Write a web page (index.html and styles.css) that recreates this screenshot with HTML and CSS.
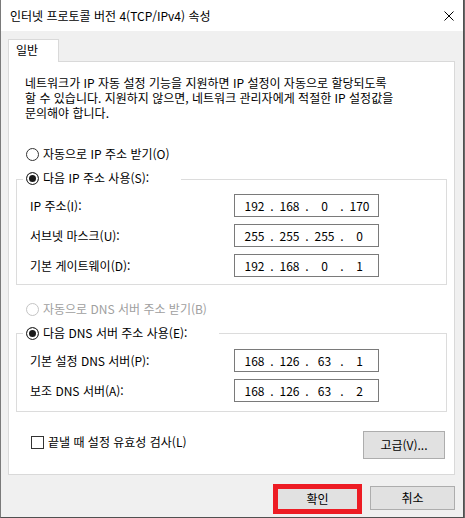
FILE: index.html
```html
<!DOCTYPE html>
<html lang="ko">

<head>
  <meta charset="UTF-8">
  <title>인터넷 프로토콜 버전 4(TCP/IPv4) 속성</title>
  <link rel="stylesheet" href="styles.css">
</head>

<body>
  <div class="window">
    <div class="titlebar">
      <span class="title">인터넷 프로토콜 버전 4(TCP/IPv4) 속성</span>
      <svg class="close" width="10" height="10" viewBox="0 0 10 10">
        <path d="M0.5 0.5L9.5 9.5M9.5 0.5L0.5 9.5" stroke="#000" stroke-width="1" fill="none"/>
      </svg>
    </div>

    <div class="dialog">
      <div class="tabs">
        <div class="tab">일반</div>
      </div>

      <div class="panel">
        <p class="intro">
          네트워크가 IP 자동 설정 기능을 지원하면 IP 설정이 자동으로 할당되도록<br>
          할 수 있습니다. 지원하지 않으면, 네트워크 관리자에게 적절한 IP 설정값을<br>
          문의해야 합니다.
        </p>

        <div class="radio-row first">
          <span class="radio"></span>자동으로 IP 주소 받기(O)
        </div>

        <div class="group ip-group">
          <div class="group-title">
            <span class="radio checked"></span>다음 IP 주소 사용(S):
          </div>
          <div class="field-row">
            <span class="field-label">IP 주소(I):</span>
            <div class="ip-box">
              <span class="octet">192</span><span class="dot">.</span><span class="octet">168</span><span class="dot">.</span><span class="octet">0</span><span class="dot">.</span><span class="octet">170</span>
            </div>
          </div>
          <div class="field-row">
            <span class="field-label">서브넷 마스크(U):</span>
            <div class="ip-box">
              <span class="octet">255</span><span class="dot">.</span><span class="octet">255</span><span class="dot">.</span><span class="octet">255</span><span class="dot">.</span><span class="octet">0</span>
            </div>
          </div>
          <div class="field-row">
            <span class="field-label">기본 게이트웨이(D):</span>
            <div class="ip-box">
              <span class="octet">192</span><span class="dot">.</span><span class="octet">168</span><span class="dot">.</span><span class="octet">0</span><span class="dot">.</span><span class="octet">1</span>
            </div>
          </div>
        </div>

        <div class="radio-row disabled">
          <span class="radio"></span>자동으로 DNS 서버 주소 받기(B)
        </div>

        <div class="group dns-group">
          <div class="group-title">
            <span class="radio checked"></span>다음 DNS 서버 주소 사용(E):
          </div>
          <div class="field-row">
            <span class="field-label">기본 설정 DNS 서버(P):</span>
            <div class="ip-box">
              <span class="octet">168</span><span class="dot">.</span><span class="octet">126</span><span class="dot">.</span><span class="octet">63</span><span class="dot">.</span><span class="octet">1</span>
            </div>
          </div>
          <div class="field-row">
            <span class="field-label">보조 DNS 서버(A):</span>
            <div class="ip-box">
              <span class="octet">168</span><span class="dot">.</span><span class="octet">126</span><span class="dot">.</span><span class="octet">63</span><span class="dot">.</span><span class="octet">2</span>
            </div>
          </div>
        </div>

        <div class="bottom-row">
          <div class="check-row">
            <span class="checkbox"></span>끝낼 때 설정 유효성 검사(L)
          </div>
          <button class="btn advanced">고급(V)...</button>
        </div>
      </div>

      <div class="footer">
        <div class="mark">
          <button class="btn ok">확인</button>
        </div>
        <button class="btn cancel">취소</button>
      </div>
    </div>
  </div>
</body>

</html>
```

FILE: styles.css
```css
* {
  box-sizing: border-box;
}

html {
  background: #6a6a6a;
}

body {
  margin: 0;
  font-family: "Noto Sans CJK KR", "Noto Sans", sans-serif;
  font-size: 12px;
  line-height: 16px;
  color: #000;
}

.window {
  width: 464px;
  height: 518px;
  background: #f0f0f0;
  border-left: 1px solid #7a7a7a;
  border-right: 1px solid #505050;
  border-bottom: 1px solid #505050;
  display: flex;
  flex-direction: column;
}

.titlebar {
  height: 31px;
  background: #fff;
  display: flex;
  align-items: center;
  justify-content: space-between;
  padding: 0 9px 0 9px;
}

.title {
  line-height: 16px;
}

.close {
  display: block;
  margin-top: 1px;
}

.dialog {
  padding: 8px 8px 0 7px;
}

.tabs {
  display: flex;
}

.tab {
  position: relative;
  z-index: 1;
  width: 51px;
  height: 23px;
  margin-bottom: -1px;
  padding: 1px 0 0 7px;
  background: #fff;
  border: 1px solid #d9d9d9;
  border-bottom: none;
  line-height: 17px;
}

.panel {
  height: 414px;
  background: #fff;
  border: 1px solid #d9d9d9;
  padding-top: 13px;
}

.intro {
  margin: 0;
  padding-left: 16px;
  line-height: 15px;
  white-space: nowrap;
}

.radio-row {
  display: flex;
  align-items: center;
  height: 16px;
  padding-left: 17px;
}

.radio-row.first {
  margin-top: 26px;
}

.radio-row.disabled {
  margin-top: 16px;
  color: #a0a0a0;
}

.radio {
  flex: 0 0 13px;
  width: 13px;
  height: 13px;
  margin-right: 4px;
  border: 1px solid #333;
  border-radius: 50%;
  background: #fff;
}

.radio.checked {
  background: #1a1a1a;
  box-shadow: inset 0 0 0 2px #fff;
}

.disabled .radio {
  border-color: #c4c4c4;
}

.group {
  margin: 17px 7px 0 7px;
  border: 1px solid #dcdcdc;
  padding: 0 0 7px 13px;
}

.group-title {
  display: flex;
  align-items: center;
  width: fit-content;
  height: 16px;
  margin: -10px 0 0 -7px;
  padding: 0 32px 0 3px;
  background: #fff;
}

.ip-group .group-title + .field-row {
  margin-top: 8px;
}

.dns-group {
  margin-top: 16px;
  padding-bottom: 9px;
}

.dns-group .group-title {
  margin-top: -9px;
}

.dns-group .group-title + .field-row {
  margin-top: 8px;
}

.field-row {
  display: flex;
  align-items: center;
  margin-top: 7px;
}

.field-label {
  flex: 0 0 204px;
}

.ip-box {
  display: flex;
  align-items: center;
  width: 145px;
  height: 23px;
  padding-left: 6px;
  border: 1px solid #7a7a7a;
  background: #fff;
}

.octet {
  width: 27px;
  text-align: center;
}

.dot {
  width: 8px;
  text-align: center;
}

.bottom-row {
  display: flex;
  justify-content: space-between;
  align-items: flex-start;
  margin-top: 19px;
  padding: 0 9px 0 22px;
}

.check-row {
  display: flex;
  align-items: center;
  height: 16px;
  margin-top: 3px;
}

.checkbox {
  width: 13px;
  height: 13px;
  margin-right: 4px;
  border: 1px solid #333;
  background: #fff;
}

.btn {
  font-family: inherit;
  font-size: 12px;
  line-height: 16px;
  color: #000;
  background: #e1e1e1;
  border: 1px solid #adadad;
  padding: 0;
  margin: 0;
}

.advanced {
  width: 82px;
  height: 28px;
}

.footer {
  display: flex;
  justify-content: flex-end;
  align-items: flex-start;
  padding-top: 9px;
}

.mark {
  border: 5px solid #ed1c24;
  margin-right: 8px;
}

.ok {
  display: block;
  width: 79px;
  height: 20px;
  border: none;
}

.cancel {
  width: 85px;
  height: 24px;
  margin-top: 2px;
}
```
